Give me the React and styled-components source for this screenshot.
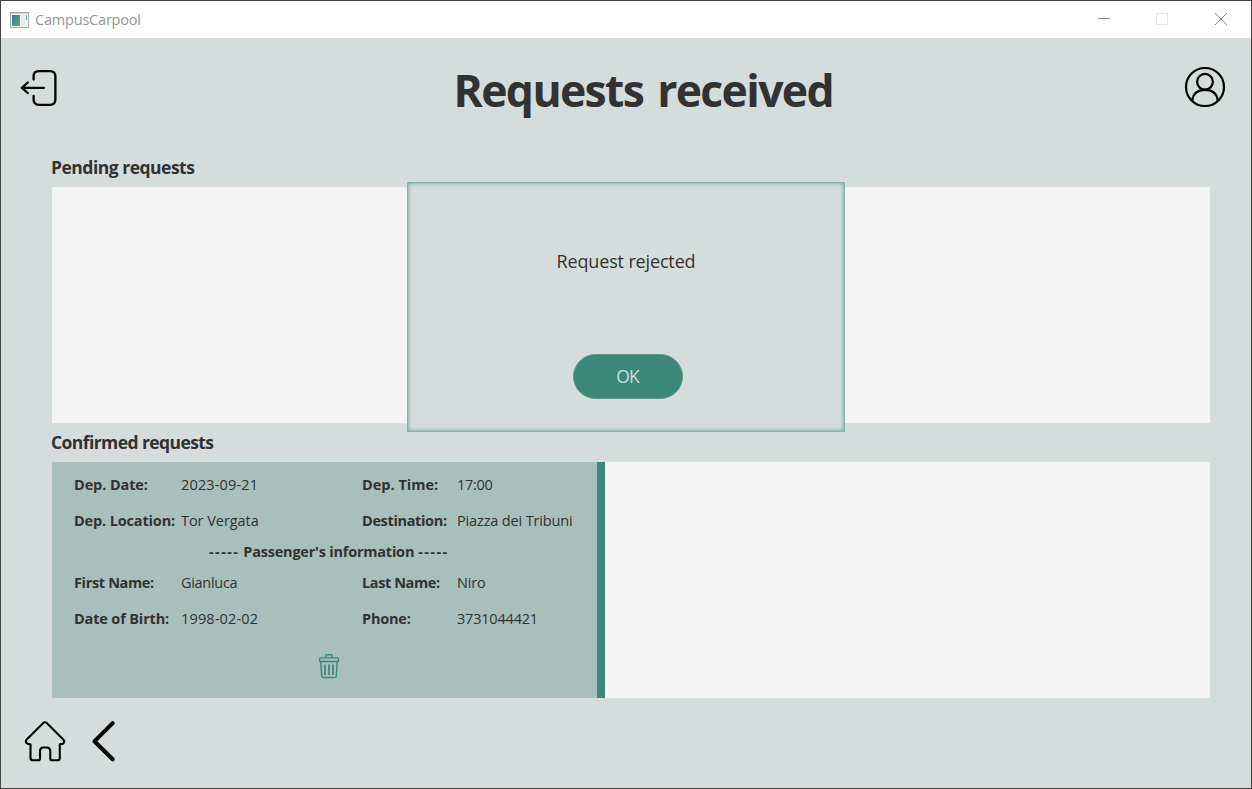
import React from "react";
import styled, { createGlobalStyle } from "styled-components";

const Global = createGlobalStyle`
  * { box-sizing: border-box; }
  body { margin: 0; font-family: "Open Sans", "Noto Sans", sans-serif; color: #323232; }
`;

const Window = styled.div`
  position: relative;
  display: flex;
  flex-direction: column;
  width: 1252px;
  height: 789px;
  border: 1px solid #434343;
  background: #d4dddb;
  overflow: hidden;
`;

const TitleBar = styled.div`
  display: flex;
  align-items: center;
  flex: none;
  height: 37px;
  padding: 0 2px 0 9px;
  background: #fff;
`;

const Text = styled.span`
  font-size: ${(p) => p.$size || 15}px;
  font-weight: ${(p) => (p.$bold ? 700 : 400)};
  letter-spacing: ${(p) => p.$track || 0}px;
  line-height: ${(p) => p.$line || 20}px;
  color: ${(p) => p.$color || "inherit"};
  white-space: nowrap;
`;

const AppName = styled(Text)`
  margin-left: 6px;
  flex: 1;
`;

const Controls = styled.div`
  display: flex;
  svg { width: 58px; height: 37px; display: block; }
`;

const Header = styled.header`
  display: flex;
  align-items: flex-start;
  justify-content: space-between;
  flex: none;
  height: 112px;
  padding: 28px 25px 0 18px;
`;

const Title = styled.h1`
  margin: -6px 0 0 42px;
  width: 380px;
  font-size: 44.5px;
  line-height: 60px;
  font-weight: 700;
  letter-spacing: -1.65px;
  word-spacing: 4px;
  white-space: nowrap;
`;

const IconButton = styled.button`
  display: flex;
  padding: 0;
  border: 0;
  background: none;
  color: ${(p) => p.$color || "#000"};
`;

const Section = styled.section`
  flex: none;
  height: 275px;
  padding: 0 41px 0 51px;
`;

const SectionTitle = styled.h2`
  margin: 0 0 0 -1px;
  height: 37px;
  padding-top: 4px;
  font-size: 17.5px;
  line-height: 26px;
  font-weight: 700;
  letter-spacing: ${(p) => p.$track}px;
`;

const Panel = styled.div`
  display: flex;
  height: 236px;
  background: #f4f4f4;
`;

const Card = styled.article`
  display: flex;
  flex-direction: column;
  width: 553px;
  padding: 5px 0 0 22px;
  border-right: 8px solid #3b8779;
  background: #a9bfbb;
`;

const Fields = styled.div`
  display: grid;
  grid-template-columns: 107px 181px 95px 1fr;
  grid-auto-rows: 36px;
  align-items: center;
`;

const Divider = styled.div`
  display: flex;
  align-items: center;
  gap: 4px;
  height: 26px;
  padding-left: 135px;
`;

const CardActions = styled.div`
  display: flex;
  padding: 16px 0 0 244px;
`;

const Footer = styled.footer`
  display: flex;
  align-items: flex-start;
  gap: 25px;
  padding: 20px 0 0 23px;
`;

const Dialog = styled.div`
  position: absolute;
  left: 406px;
  top: 181px;
  width: 438px;
  height: 250px;
  display: flex;
  flex-direction: column;
  align-items: center;
  padding-top: 65px;
  border: 1px solid #82b2a9;
  background: #d4dddb;
  box-shadow: inset 0 0 4px #5c9c90;
`;

const OkButton = styled.button`
  width: 110px;
  height: 45px;
  margin: 80px 0 0 3px;
  padding: 0 0 1px;
  border: 1px solid #5c9c90;
  border-radius: 23px;
  background: #3b8779;
  color: #d4dddb;
  font: 400 17.5px/40px "Open Sans", sans-serif;
  letter-spacing: -0.8px;
`;

const AppIcon = () => (
  <svg width="19" height="16" viewBox="0 0 19 16">
    <defs>
      <linearGradient id="tile" x1="0" y1="0" x2="1" y2="1">
        <stop offset="0" stopColor="#3b73a4" />
        <stop offset="1" stopColor="#4bb46b" />
      </linearGradient>
    </defs>
    <rect x=".5" y=".5" width="18" height="15" fill="#f5f6f6" stroke="#a2a8ab" />
    <path d="M1 1.5H18" stroke="#cbd0d3" />
    <rect x="2" y="3" width="8" height="11" fill="url(#tile)" />
    <rect x="11" y="3" width="4" height="11" fill="#e8eaec" />
    <rect x="16" y="3" width="1" height="5" fill="#57a68c" />
  </svg>
);

const LogoutIcon = () => (
  <svg width="42" height="42" viewBox="0 -1 42 42" fill="none" stroke="currentColor" strokeWidth="2.3" strokeLinecap="round" strokeLinejoin="round">
    <path d="M14.6 12.5V9.5Q14.6 4.2 20 4.2H31Q36.4 4.2 36.4 9.7V32.5Q36.4 37.8 31 37.8H20Q14.6 37.8 14.6 32.5V29" />
    <path d="M25 20.8H3M8.8 15.5L2.8 20.8L8.8 26" />
  </svg>
);

const UserIcon = () => (
  <svg width="42" height="42" viewBox="0 0 42 42" fill="none" stroke="currentColor" strokeWidth="2.2">
    <circle cx="21" cy="21" r="19" />
    <circle cx="21" cy="15.8" r="7.9" />
    <path d="M8.2 34.8C9 27 14.4 23.8 21 23.8S33 27 33.8 34.8" />
  </svg>
);

const HomeIcon = () => (
  <svg width="42" height="44" viewBox="0 0 42 44" fill="none" stroke="currentColor" strokeWidth="2.1" strokeLinejoin="round">
    <path d="M19 3.2Q21 1.3 23 3.2L39.3 19.5Q41.3 22 39 23.7L35.8 24.4V38Q35.8 40.3 33.5 40.3H28Q26.3 40.3 26.3 38.5V31.5Q26.3 27.5 22.5 27.5H19.5Q16 27.5 16 31.5V38.5Q16 40.3 14.2 40.3H9Q6.5 40.3 6.5 38V24.4L3 23.4Q.8 21.7 2.7 19.5Z" />
  </svg>
);

const BackIcon = () => (
  <svg width="26" height="44" viewBox="0 0 26 44" fill="none" stroke="currentColor" strokeWidth="4" strokeLinecap="round" strokeLinejoin="round">
    <path d="M21.7 3.2L3.4 21.3L21.7 39.3" />
  </svg>
);

const TrashIcon = () => (
  <svg width="22" height="26" viewBox="0 0 22 26" fill="none" stroke="currentColor" strokeWidth="1.4" strokeLinejoin="round">
    <path d="M7.7 4.7V3Q7.7 1.8 9 1.8H13Q14.3 1.8 14.3 3V4.7" />
    <rect x="1.5" y="4.9" width="19" height="3.6" rx="1" />
    <path d="M2.8 8.5L3.7 23Q3.8 24.5 5.3 24.5H16.7Q18.2 24.5 18.3 23L19.2 8.5" />
    <path d="M7 11.5V22M11 11.5V22M15 11.5V22" strokeWidth="1.7" />
  </svg>
);

const trip = [
  ["Dep. Date:", -0.1, "2023-09-21", 0.15, "Dep. Time:", 0, "17:00", -0.3],
  ["Dep. Location:", -0.15, "Tor Vergata", -0.05, "Destination:", -0.35, "Piazza dei Tribuni", -0.15],
];
const passenger = [
  ["First Name:", -0.35, "Gianluca", -0.3, "Last Name:", -0.4, "Niro", -0.2],
  ["Date of Birth:", -0.15, "1998-02-02", 0.15, "Phone:", -0.2, "3731044421", -0.2],
];

const FieldRows = ({ rows }) => (
  <Fields>
    {rows.map(([a, at, b, bt, c, ct, d, dt]) => (
      <React.Fragment key={a}>
        <Text $bold $size={14.5} $track={at}>{a}</Text>
        <Text $size={14.5} $track={bt}>{b}</Text>
        <Text $bold $size={14.5} $track={ct}>{c}</Text>
        <Text $size={14.5} $track={dt}>{d}</Text>
      </React.Fragment>
    ))}
  </Fields>
);

export default function App() {
  return (
    <Window>
      <Global />
      <TitleBar>
        <AppIcon />
        <AppName $size={14.5} $track={-0.2} $color="#949494">CampusCarpool</AppName>
        <Controls>
          <svg viewBox="0 0 58 37"><path d="M23 17.5H35" stroke="#8c8c8c" /></svg>
          <svg viewBox="0 0 58 37"><rect x="23.5" y="12.5" width="11" height="11" fill="none" stroke="#e6e6e6" /></svg>
          <svg viewBox="0 0 58 37"><path d="M24 12L36 24M36 12L24 24" stroke="#858585" /></svg>
        </Controls>
      </TitleBar>
      <Header>
        <IconButton aria-label="Log out"><LogoutIcon /></IconButton>
        <Title>Requests received</Title>
        <IconButton aria-label="Profile"><UserIcon /></IconButton>
      </Header>
      <Section>
        <SectionTitle $track={-0.5}>Pending requests</SectionTitle>
        <Panel />
      </Section>
      <Section>
        <SectionTitle $track={-0.58}>Confirmed requests</SectionTitle>
        <Panel>
          <Card>
            <FieldRows rows={trip} />
            <Divider>
              <Text $bold $size={14.5} $track={1.4}>-----</Text>
              <Text $bold $size={14.5} $track={-0.22}>Passenger's information</Text>
              <Text $bold $size={14.5} $track={1.4}>-----</Text>
            </Divider>
            <FieldRows rows={passenger} />
            <CardActions><IconButton $color="#3b8779" aria-label="Delete"><TrashIcon /></IconButton></CardActions>
          </Card>
        </Panel>
      </Section>
      <Footer>
        <IconButton aria-label="Home"><HomeIcon /></IconButton>
        <IconButton aria-label="Back"><BackIcon /></IconButton>
      </Footer>
      <Dialog role="dialog">
        <Text $size={18} $line={26} $track={-0.15}>Request rejected</Text>
        <OkButton>OK</OkButton>
      </Dialog>
    </Window>
  );
}
